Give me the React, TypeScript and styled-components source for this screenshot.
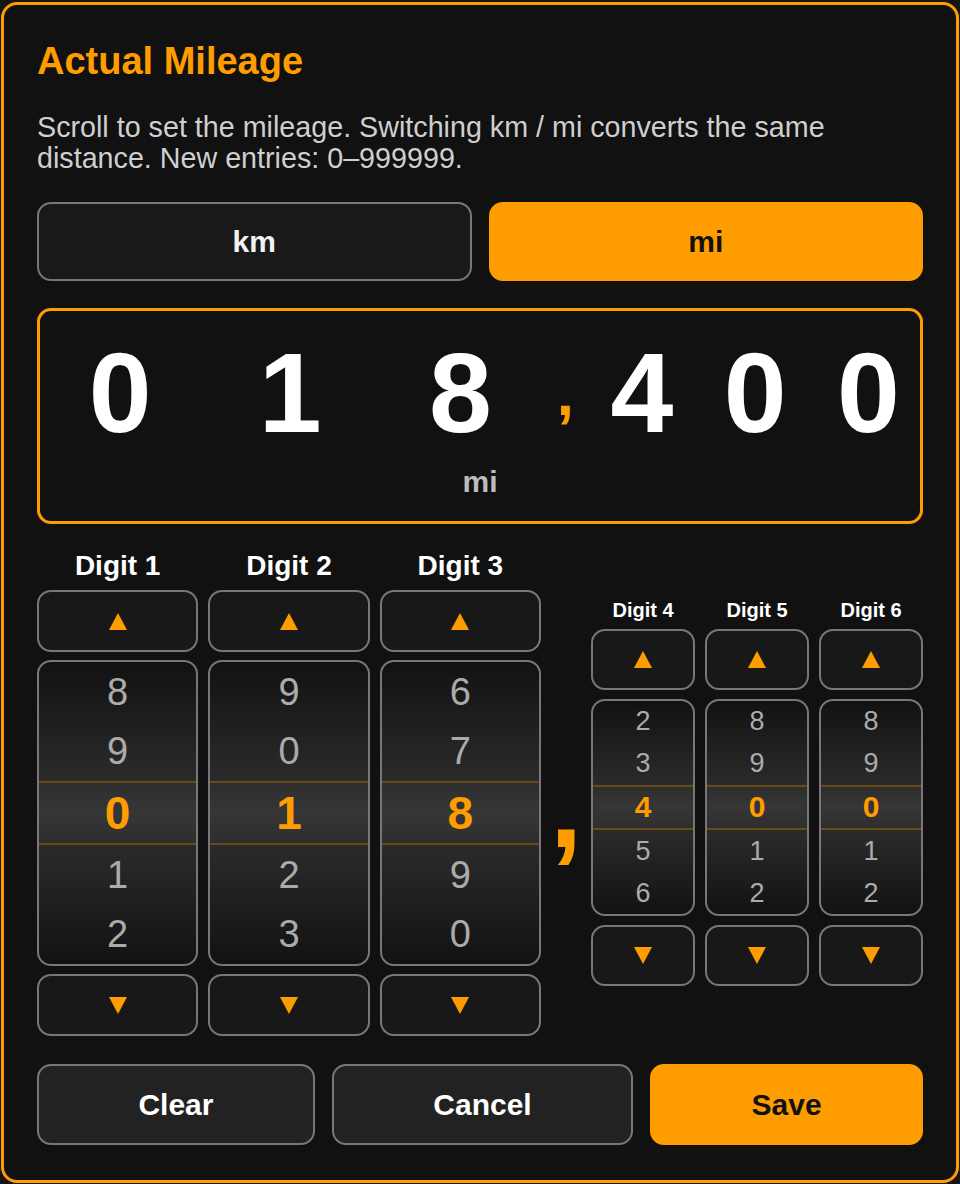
import React from 'react';
import styled, { createGlobalStyle, css } from 'styled-components';

const ORANGE = '#ff9d00';

const GlobalStyle = createGlobalStyle`
  * { box-sizing: border-box; }
  body {
    margin: 0;
    background: #161616;
    font-family: "Liberation Sans", Arial, sans-serif;
  }
`;

type Size = 'lg' | 'sm';

const DIGITS: { label: string; value: number; size: Size }[] = [
  { label: 'Digit 1', value: 0, size: 'lg' },
  { label: 'Digit 2', value: 1, size: 'lg' },
  { label: 'Digit 3', value: 8, size: 'lg' },
  { label: 'Digit 4', value: 4, size: 'sm' },
  { label: 'Digit 5', value: 0, size: 'sm' },
  { label: 'Digit 6', value: 0, size: 'sm' },
];

const wrap = (n: number) => ((n % 10) + 10) % 10;

const TriangleIcon = ({ up }: { up?: boolean }) => (
  <svg width="18" height="17" viewBox="0 0 18 17" aria-hidden="true">
    {up ? <polygon points="9,0 18,17 0,17" fill={ORANGE} /> : <polygon points="0,0 18,0 9,17" fill={ORANGE} />}
  </svg>
);

const App = () => {
  const left = DIGITS.slice(0, 3);
  const right = DIGITS.slice(3);

  const renderColumn = (d: (typeof DIGITS)[number]) => (
    <DigitColumn key={d.label} $size={d.size}>
      <DigitLabel $size={d.size}>{d.label}</DigitLabel>
      <ArrowButton $size={d.size} aria-label={`${d.label} up`}>
        <TriangleIcon up />
      </ArrowButton>
      <Wheel $size={d.size}>
        {[-2, -1, 0, 1, 2].map((o) => (
          <WheelRow key={o} $size={d.size} $selected={o === 0}>
            {wrap(d.value + o)}
          </WheelRow>
        ))}
      </Wheel>
      <ArrowButton $size={d.size} aria-label={`${d.label} down`}>
        <TriangleIcon />
      </ArrowButton>
    </DigitColumn>
  );

  return (
    <>
      <GlobalStyle />
      <Modal>
        <Title>Actual Mileage</Title>
        <Description>
          Scroll to set the mileage. Switching km / mi converts the same distance. New entries: 0–999999.
        </Description>

        <UnitToggle>
          <UnitButton>km</UnitButton>
          <UnitButton $active>mi</UnitButton>
        </UnitToggle>

        <Display>
          <DigitGrid>
            <DisplayGroup>
              {left.map((d) => (
                <DisplayDigit key={d.label}>{d.value}</DisplayDigit>
              ))}
            </DisplayGroup>
            <DisplayComma>,</DisplayComma>
            <DisplayGroup>
              {right.map((d) => (
                <DisplayDigit key={d.label}>{d.value}</DisplayDigit>
              ))}
            </DisplayGroup>
          </DigitGrid>
          <DisplayUnit>mi</DisplayUnit>
        </Display>

        <PickerRow>
          <PickerGroup>{left.map(renderColumn)}</PickerGroup>
          <PickerComma>,</PickerComma>
          <PickerGroup>{right.map(renderColumn)}</PickerGroup>
        </PickerRow>

        <Actions>
          <ActionButton>Clear</ActionButton>
          <ActionButton>Cancel</ActionButton>
          <ActionButton $primary>Save</ActionButton>
        </Actions>
      </Modal>
    </>
  );
};

export default App;

const Modal = styled.section`
  margin: 2px 1px 0;
  height: 1181px;
  border: 3px solid ${ORANGE};
  border-radius: 16px;
  background: #111111;
  padding: 35px 33px 34px;
  display: flex;
  flex-direction: column;
`;

const Title = styled.h2`
  margin: 0;
  color: ${ORANGE};
  font-size: 38px;
  font-weight: 700;
`;

const Description = styled.p`
  margin: 29px 0 0;
  color: #cfcfcf;
  font-size: 28.7px;
  line-height: 31px;
`;

const UnitToggle = styled.div`
  margin-top: 28px;
  display: grid;
  grid-template-columns: 1fr 1fr;
  gap: 17px;
`;

const UnitButton = styled.button<{ $active?: boolean }>`
  height: 79px;
  border-radius: 14px;
  border: 2px solid ${(p) => (p.$active ? ORANGE : '#777')};
  background: ${(p) => (p.$active ? ORANGE : '#191919')};
  color: ${(p) => (p.$active ? '#111' : '#f2f2f2')};
  font-family: inherit;
  font-size: 30px;
  font-weight: 700;
`;

const Display = styled.div`
  margin-top: 27px;
  height: 216px;
  border: 3px solid ${ORANGE};
  border-radius: 14px;
  padding: 26px 0 0;
  display: flex;
  flex-direction: column;
  align-items: stretch;
`;

const DigitGrid = styled.div`
  display: grid;
  grid-template-columns: 504fr 30px 332fr;
  gap: 10px;
`;

const DisplayGroup = styled.div`
  display: grid;
  grid-template-columns: repeat(3, 1fr);
  gap: 10px;
`;

const DisplayDigit = styled.span`
  color: #ffffff;
  font-size: 113px;
  font-weight: 700;
  line-height: 1;
  text-align: center;
`;

const DisplayComma = styled.span`
  align-self: center;
  color: ${ORANGE};
  font-size: 62px;
  font-weight: 700;
  line-height: 1;
  text-align: center;
`;

const DisplayUnit = styled.span`
  margin-top: 15px;
  color: #bdbdbd;
  font-size: 30px;
  font-weight: 700;
  text-align: center;
`;

const PickerRow = styled.div`
  margin-top: 26px;
  display: grid;
  grid-template-columns: 504fr 30px 332fr;
  gap: 10px;
  align-items: center;
`;

const PickerGroup = styled.div`
  display: grid;
  grid-template-columns: repeat(3, 1fr);
  gap: 10px;
`;

const PickerComma = styled.span`
  align-self: stretch;
  display: flex;
  align-items: center;
  justify-content: center;
  padding-top: 28px;
  color: ${ORANGE};
  font-size: 116px;
  font-weight: 700;
  line-height: 1;
`;

const DigitColumn = styled.div<{ $size: Size }>`
  display: flex;
  flex-direction: column;
  gap: ${(p) => (p.$size === 'lg' ? 8 : 9)}px;
`;

const DigitLabel = styled.span<{ $size: Size }>`
  color: #ffffff;
  font-weight: 700;
  text-align: center;
  ${(p) =>
    p.$size === 'lg'
      ? css`
          font-size: 28px;
          line-height: 32px;
        `
      : css`
          font-size: 20px;
          line-height: 20px;
        `}
`;

const ArrowButton = styled.button<{ $size: Size }>`
  height: ${(p) => (p.$size === 'lg' ? 62 : 61)}px;
  border: 2px solid #777;
  border-radius: 14px;
  background: #181818;
  display: flex;
  align-items: center;
  justify-content: center;
  padding: 0;
`;

const Wheel = styled.div<{ $size: Size }>`
  height: ${(p) => (p.$size === 'lg' ? 306 : 217)}px;
  border: 2px solid #777;
  border-radius: 14px;
  overflow: hidden;
  display: flex;
  flex-direction: column;
  background: linear-gradient(
    to bottom,
    #121212 0%,
    #222222 25%,
    #2b2b2b 40%,
    #2b2b2b 60%,
    #222222 75%,
    #121212 100%
  );
`;

const WheelRow = styled.div<{ $size: Size; $selected?: boolean }>`
  flex: 1;
  display: flex;
  align-items: center;
  justify-content: center;
  color: #ababab;
  font-size: ${(p) => (p.$size === 'lg' ? 38 : 27)}px;
  line-height: 1;
  ${(p) =>
    p.$selected &&
    css`
      color: ${ORANGE};
      font-weight: 700;
      font-size: ${p.$size === 'lg' ? 46 : 30}px;
      background: linear-gradient(to bottom, #2e2e2e, #363636 50%, #2e2e2e);
      border-top: 2px solid #6a4918;
      border-bottom: 2px solid #6a4918;
    `}
`;

const Actions = styled.div`
  margin-top: 28px;
  display: flex;
  gap: 17px;
`;

const ActionButton = styled.button<{ $primary?: boolean }>`
  flex: 1 1 auto;
  height: 81px;
  padding: 0;
  border-radius: 14px;
  border: 2px solid ${(p) => (p.$primary ? ORANGE : '#777')};
  background: ${(p) => (p.$primary ? ORANGE : '#222222')};
  color: ${(p) => (p.$primary ? '#111' : '#ffffff')};
  font-family: inherit;
  font-size: 30px;
  font-weight: 700;
`;
